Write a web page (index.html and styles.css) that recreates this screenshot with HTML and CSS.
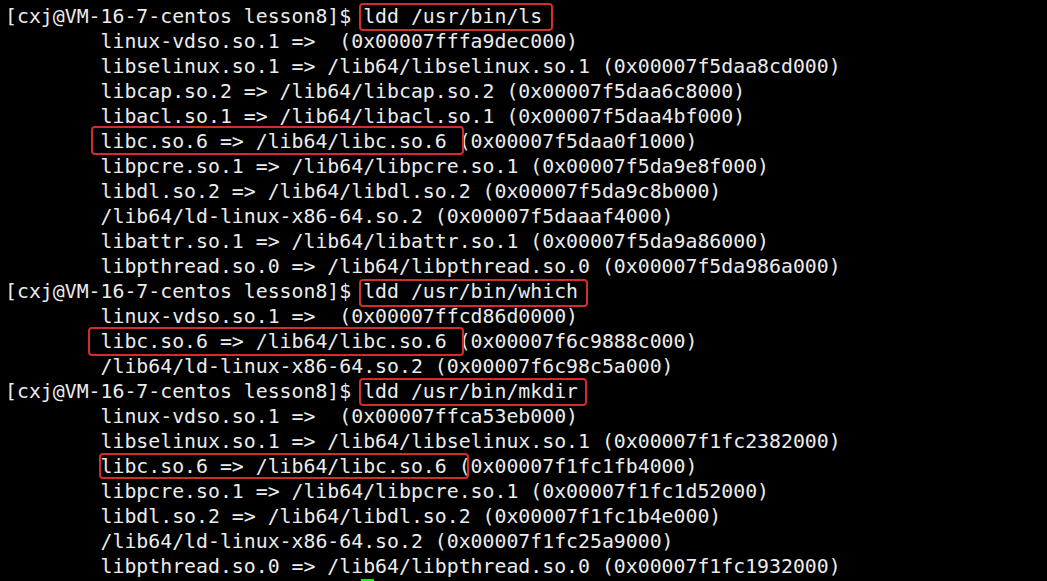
FILE: index.html
```html
<!DOCTYPE html>
<html lang="en">
<head>
<meta charset="utf-8">
<title>Terminal</title>
<link rel="stylesheet" href="styles.css">
</head>
<body>
<div class="terminal">
<pre class="output">[cxj@VM-16-7-centos lesson8]$ ldd /usr/bin/ls
        linux-vdso.so.1 =>  (0x00007fffa9dec000)
        libselinux.so.1 => /lib64/libselinux.so.1 (0x00007f5daa8cd000)
        libcap.so.2 => /lib64/libcap.so.2 (0x00007f5daa6c8000)
        libacl.so.1 => /lib64/libacl.so.1 (0x00007f5daa4bf000)
        libc.so.6 => /lib64/libc.so.6 (0x00007f5daa0f1000)
        libpcre.so.1 => /lib64/libpcre.so.1 (0x00007f5da9e8f000)
        libdl.so.2 => /lib64/libdl.so.2 (0x00007f5da9c8b000)
        /lib64/ld-linux-x86-64.so.2 (0x00007f5daaaf4000)
        libattr.so.1 => /lib64/libattr.so.1 (0x00007f5da9a86000)
        libpthread.so.0 => /lib64/libpthread.so.0 (0x00007f5da986a000)
[cxj@VM-16-7-centos lesson8]$ ldd /usr/bin/which
        linux-vdso.so.1 =>  (0x00007ffcd86d0000)
        libc.so.6 => /lib64/libc.so.6 (0x00007f6c9888c000)
        /lib64/ld-linux-x86-64.so.2 (0x00007f6c98c5a000)
[cxj@VM-16-7-centos lesson8]$ ldd /usr/bin/mkdir
        linux-vdso.so.1 =>  (0x00007ffca53eb000)
        libselinux.so.1 => /lib64/libselinux.so.1 (0x00007f1fc2382000)
        libc.so.6 => /lib64/libc.so.6 (0x00007f1fc1fb4000)
        libpcre.so.1 => /lib64/libpcre.so.1 (0x00007f1fc1d52000)
        libdl.so.2 => /lib64/libdl.so.2 (0x00007f1fc1b4e000)
        /lib64/ld-linux-x86-64.so.2 (0x00007f1fc25a9000)
        libpthread.so.0 => /lib64/libpthread.so.0 (0x00007f1fc1932000)
[cxj@VM-16-7-centos lesson8]$ </pre>
<div class="mark box-1"></div>
<div class="mark box-2"></div>
<div class="mark box-3"></div>
<div class="mark box-4"></div>
<div class="mark box-5"></div>
<div class="mark box-6"></div>
<div class="cursor"></div>
</div>
</body>
</html>
```
FILE: styles.css
```css
html, body {
  margin: 0;
  padding: 0;
  background: #000;
}

.terminal {
  position: relative;
  width: 1047px;
  height: 581px;
  overflow: hidden;
  background: #000;
}

.output {
  margin: 0;
  padding: 4px 0 0 5px;
  font-family: "DejaVu Sans Mono", monospace;
  font-size: 19.84px;
  line-height: 25px;
  color: #ececec;
  white-space: pre;
  tab-size: 8;
}

.mark {
  position: absolute;
  border: 2px solid #d42b2b;
  border-radius: 4px;
  box-sizing: border-box;
}

.box-1 { left: 359px; top: 3px;   width: 194px; height: 28px; }
.box-2 { left: 91px;  top: 126px; width: 373px; height: 29px; }
.box-3 { left: 359px; top: 279px; width: 229px; height: 28px; }
.box-4 { left: 88px;  top: 327px; width: 376px; height: 29px; }
.box-5 { left: 359px; top: 378px; width: 228px; height: 28px; }
.box-6 { left: 99px;  top: 453px; width: 370px; height: 26px; }

.cursor {
  position: absolute;
  left: 361px;
  top: 579px;
  width: 13px;
  height: 25px;
  background: #1ee81e;
}
```
